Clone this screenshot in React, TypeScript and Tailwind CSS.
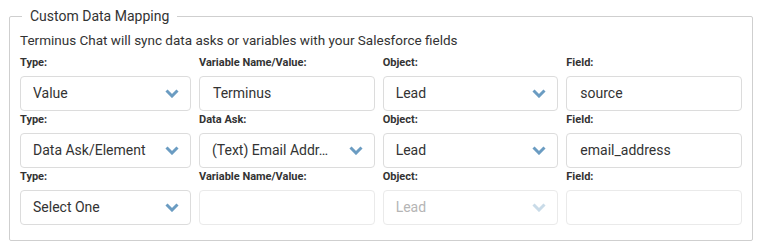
import { ReactNode } from 'react'

function Chevron({ faded }: { faded?: boolean }) {
  return (
    <svg
      viewBox="0 0 14 9"
      className={faded ? 'h-[9px] w-[14px] text-[#c9dbe8]' : 'h-[9px] w-[14px] text-[#6b9cc2]'}
      fill="none"
      stroke="currentColor"
      strokeWidth="3"
      strokeLinecap="butt"
      strokeLinejoin="miter"
    >
      <path d="M1.5 1.5 L7 7 L12.5 1.5" />
    </svg>
  )
}

function Field({ label, children }: { label: string; children: ReactNode }) {
  return (
    <div className="flex flex-col">
      <div className="h-[15px] text-[11px] font-bold leading-[15px] text-[#333]">{label}</div>
      <div className="mt-[6px]">{children}</div>
    </div>
  )
}

function Select({ value, disabled }: { value: string; disabled?: boolean }) {
  return (
    <div
      className={
        disabled
          ? 'flex h-[35px] items-center justify-between rounded-[4px] border border-[#eaeaea] bg-white pl-[12px] pr-[11px] text-[14px] text-[#b5b5b5]'
          : 'flex h-[35px] items-center justify-between rounded-[4px] border border-[#dcdcdc] bg-white pl-[12px] pr-[11px] text-[14px] text-[#333]'
      }
    >
      <span className="truncate">{value}</span>
      <Chevron faded={disabled} />
    </div>
  )
}

function Input({ value, faint }: { value?: string; faint?: boolean }) {
  return (
    <div
      className={
        faint
          ? 'flex h-[35px] items-center rounded-[4px] border border-[#eaeaea] bg-white px-[13px] text-[14px] text-[#333]'
          : 'flex h-[35px] items-center rounded-[4px] border border-[#dcdcdc] bg-white px-[13px] text-[14px] text-[#333]'
      }
    >
      {value}
    </div>
  )
}

export default function App() {
  return (
    <div className="h-[247px] w-[759px] bg-white pl-[9px] pr-[6px] pt-[8px] font-['Roboto',sans-serif]">
      <fieldset className="h-[233px] rounded-[2px] border border-[#cfcfcf] px-[10px] pb-[14px]">
        <legend className="ml-[2px] px-[8px] text-[14px] leading-[17px] text-[#333]">
          Custom Data Mapping
        </legend>
        <p className="mt-[8px] text-[13.5px] leading-[15px] text-[#333]">
          Terminus Chat will sync data asks or variables with your Salesforce fields
        </p>
        <div className="mt-[7px] grid grid-cols-[171px_1fr_1fr_1fr] gap-x-[8px] gap-y-[1px]">
          <Field label="Type:">
            <Select value="Value" />
          </Field>
          <Field label="Variable Name/Value:">
            <Input value="Terminus" />
          </Field>
          <Field label="Object:">
            <Select value="Lead" />
          </Field>
          <Field label="Field:">
            <Input value="source" />
          </Field>

          <Field label="Type:">
            <Select value="Data Ask/Element" />
          </Field>
          <Field label="Data Ask:">
            <Select value="(Text) Email Addr…" />
          </Field>
          <Field label="Object:">
            <Select value="Lead" />
          </Field>
          <Field label="Field:">
            <Input value="email_address" />
          </Field>

          <Field label="Type:">
            <Select value="Select One" />
          </Field>
          <Field label="Variable Name/Value:">
            <Input faint />
          </Field>
          <Field label="Object:">
            <Select value="Lead" disabled />
          </Field>
          <Field label="Field:">
            <Input faint />
          </Field>
        </div>
      </fieldset>
    </div>
  )
}
